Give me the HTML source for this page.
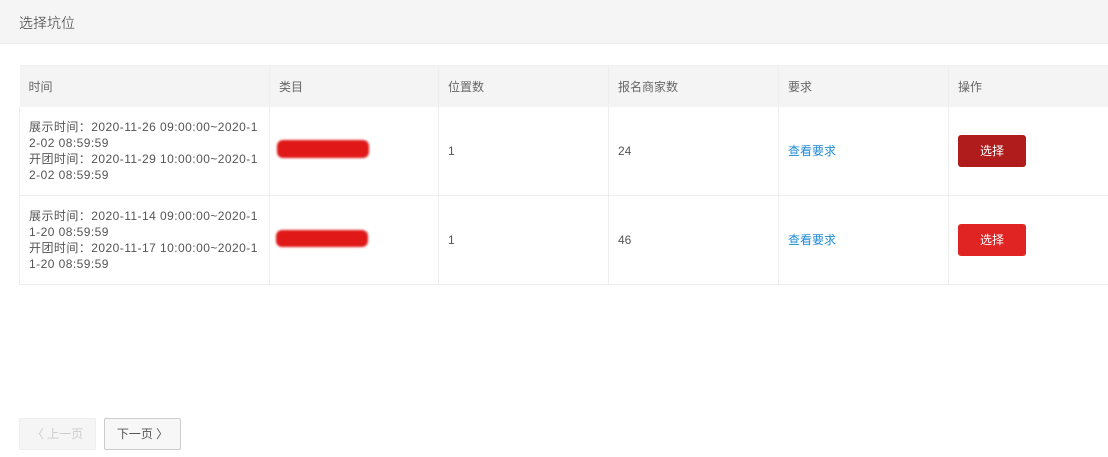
<!DOCTYPE html>
<html><head><meta charset="utf-8"><style>
*{margin:0;padding:0;box-sizing:border-box}
body{width:1108px;height:457px;overflow:hidden;background:#fff;font-family:"Liberation Sans","Noto Sans CJK SC",sans-serif;color:#555;font-size:12px;position:relative}
.hd{position:absolute;left:0;top:0;width:1108px;height:44px;background:#f5f5f5;border-bottom:1px solid #ebebeb}
.hd span{position:absolute;left:19px;top:13px;font-size:14px;color:#333;font-family:"Noto Sans CJK SC",sans-serif;font-weight:300}
table{position:absolute;left:19px;top:65px;width:1089px;border-collapse:collapse;table-layout:fixed}
th{height:41px;background:#f4f4f4;text-align:left;font-weight:normal;color:#666;padding-left:9px;font-size:12px;border-right:1px solid #eee;border-top:1px solid #eee}
td{height:89px;border:1px solid #eee;border-top:none;padding-left:9px;color:#555;font-size:12px;line-height:16px}
td:last-child,th:last-child{border-right:none}
.t{padding-right:6px;word-break:break-all;letter-spacing:0.45px}
a{color:#1e8bd6;text-decoration:none}
.b{display:inline-block;width:68px;height:32px;border-radius:3px;color:#fff;text-align:center;line-height:32px;font-size:12px}
.red{position:absolute;background:#e01818;border-radius:10px;filter:blur(1px)}
.pg{position:absolute;top:418px;height:32px;border:1px solid #ccc;border-radius:2px;line-height:30px;font-size:12px;text-align:center}
</style></head><body>
<div class="hd"><span>选择坑位</span></div>
<table>
<colgroup><col style="width:250px"><col style="width:169px"><col style="width:170px"><col style="width:170px"><col style="width:170px"><col style="width:160px"></colgroup>
<tr><th>时间</th><th>类目</th><th>位置数</th><th>报名商家数</th><th>要求</th><th>操作</th></tr>
<tr><td class="t">展示时间：2020-11-26 09:00:00~2020-12-02 08:59:59<br>开团时间：2020-11-29 10:00:00~2020-12-02 08:59:59</td><td></td><td>1</td><td>24</td><td><a>查看要求</a></td><td><span class="b" style="background:#b01c1c">选择</span></td></tr>
<tr><td class="t">展示时间：2020-11-14 09:00:00~2020-11-20 08:59:59<br>开团时间：2020-11-17 10:00:00~2020-11-20 08:59:59</td><td></td><td>1</td><td>46</td><td><a>查看要求</a></td><td><span class="b" style="background:#e02424">选择</span></td></tr>
</table>
<div class="red" style="left:277px;top:140px;width:92px;height:18px;border-radius:6px"></div>
<div class="red" style="left:276px;top:230px;width:92px;height:17px;border-radius:6px"></div>
<div class="pg" style="left:19px;width:77px;background:#f5f5f5;border-color:#eee;color:#ccc">〈 上一页</div>
<div class="pg" style="left:104px;width:77px;background:#f7f7f7;color:#555">下一页 〉</div>
</body></html>
